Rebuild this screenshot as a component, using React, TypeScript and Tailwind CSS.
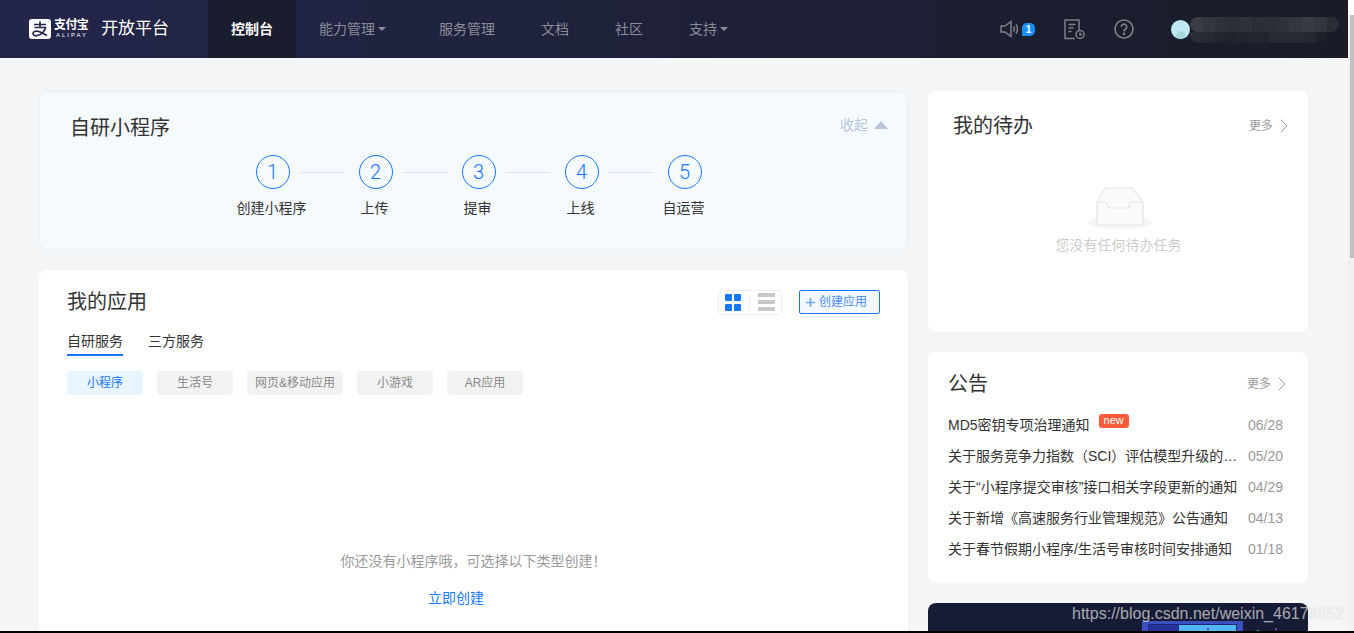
import React from "react";
import { ChevronRight } from "lucide-react";

function Caret() {
  return <span className="ml-[3px] mr-[7px] inline-block w-0 h-0 border-l-[4px] border-r-[4px] border-t-[4px] border-l-transparent border-r-transparent border-t-[#8a8c98]" />;
}

function NavItem({ label, caret, active }: { label: string; caret?: boolean; active?: boolean }) {
  return (
    <div className={`h-full flex items-center px-[23px] text-[14px] ${active ? "bg-[#1a1d2e] text-white font-bold" : "text-[#8a8c98]"}`}>
      {label}
      {caret && <Caret />}
    </div>
  );
}

function Logo() {
  return (
    <div className="flex items-center">
      <svg width="22" height="20" viewBox="0 0 22 20">
        <rect width="22" height="20" rx="3" fill="#fff" />
        <path d="M5 5.500h12M11 2.500v5.500M5.500 8.500h11c-.8 3.500-3.800 7.500-8.500 8.200-2.300.3-4-.5-4-2.200 0-1.800 2.300-3 5-2.200 2.800.8 6 2.700 9 4.200" stroke="#23264a" strokeWidth="1.7" fill="none" />
      </svg>
      <div className="ml-[3px] flex flex-col items-center leading-none text-white">
        <span className="text-[12px] font-bold leading-[13px] tracking-[-0.7px]">支付宝</span>
        <span className="text-[6px] leading-[7px] tracking-[2px] ml-[2px]">ALIPAY</span>
      </div>
      <span className="ml-[13px] text-white text-[17px]">开放平台</span>
    </div>
  );
}

function Step({ n, label }: { n: number; label: string }) {
  return (
    <div className="w-[34px] flex flex-col items-center">
      <div className="w-[34px] h-[34px] rounded-full border border-[#1677ff] text-[#1677ff] text-[20px] font-light font-['Roboto',sans-serif] flex items-center justify-center shrink-0">{n}</div>
      <div className="mt-[9px] mr-[2px] text-[14px] leading-[20px] text-[#333] whitespace-nowrap">{label}</div>
    </div>
  );
}

function Line() {
  return <div className="w-[44px] h-px ml-[10px] mr-[15px] mt-[17px] bg-[#d5e5f9]" />;
}

function Chip({ label, active, w }: { label: string; active?: boolean; w: string }) {
  return (
    <div className={`h-[24px] ${w} rounded-[4px] flex items-center justify-center text-[12px] ${active ? "bg-[#e8f4ff] text-[#1677ff]" : "bg-[#f2f2f2] text-[#888]"}`}>{label}</div>
  );
}

function More() {
  return (
    <div className="flex items-center text-[12px] text-[#999]">
      更多
      <ChevronRight size={24} strokeWidth={1} className="ml-[-1px]" />
    </div>
  );
}

function Notice({ title, date, isNew }: { title: string; date: string; isNew?: boolean }) {
  return (
    <div className="h-[31px] flex items-center justify-between">
      <div className="flex items-start w-[290px] min-w-0">
        <span className="text-[14px] leading-[20px] text-[#333] truncate">{title}</span>
        {isNew && <span className="ml-[9px] mt-[-1px] h-[14px] px-[5px] rounded-[3px] bg-[#ff5a3c] text-white text-[11px] leading-[12px] shrink-0">new</span>}
      </div>
      <span className="text-[14px] leading-[20px] mt-[1px] text-[#999]">{date}</span>
    </div>
  );
}

const mosaicTop = ["#3a3d46", "#33363f", "#2e313a", "#2c2f38", "#2e313a", "#2b2e37", "#2c2f38", "#2e313a", "#33363f", "#383a44", "#34363f", "#2a2d36"];
const mosaicBottom = ["#2b2e37", "#272a33", "#23262f", "#21242d", "#22252e", "#23262f", "#21242d", "#292b34", "#292b34", "#282a33", "#262831", "#1e212a"];

function Mosaic() {
  return (
    <div className="w-[149px] h-[26px] flex flex-col mt-[2px]">
      <div className="h-[15px] flex rounded-[8px] overflow-hidden">
        {mosaicTop.map((c, i) => <div key={i} className="flex-1" style={{ backgroundColor: c }} />)}
      </div>
      <div className="h-[11px] w-[137px] flex rounded-b-[8px] overflow-hidden">
        {mosaicBottom.map((c, i) => <div key={i} className="flex-1" style={{ backgroundColor: c }} />)}
      </div>
    </div>
  );
}

export default function App() {
  return (
    <div className="relative w-[1354px] h-[633px] overflow-hidden flex bg-white font-['Liberation_Sans','Noto_Sans_CJK_SC',sans-serif]">
      <div className="w-[1348px] h-[631px] overflow-hidden flex flex-col bg-[#f3f5f7] shrink-0">
        <header className="h-[58px] shrink-0 flex items-center bg-gradient-to-r from-[#23264a] to-[#191c28]">
          <div className="w-[208px] pl-[29px] shrink-0"><Logo /></div>
          <NavItem label="控制台" active />
          <NavItem label="能力管理" caret />
          <NavItem label="服务管理" />
          <NavItem label="文档" />
          <NavItem label="社区" />
          <NavItem label="支持" caret />
          <div className="ml-auto flex items-center h-full pr-[9px]">
            <svg width="20" height="20" viewBox="0 0 20 20" fill="none" stroke="#7f8087" strokeWidth="1.5"><path d="M1 7h4l6-4.500v15L5 13H1z" /><path d="M13.500 7.500c1 1.500 1 3.500 0 5M16 5.500c2 2.500 2 6.500 0 9" /></svg>
            <span className="ml-[2px] w-[13px] h-[13px] rounded-[5px] rounded-bl-none bg-[#1890ff] text-white text-[10px] font-bold flex items-center justify-center">1</span>
            <svg className="ml-[29px]" width="21" height="21" viewBox="0 0 21 21" fill="none" stroke="#7f8087" strokeWidth="1.5"><path d="M11 19.500H1V1h14v10" /><path d="M4.500 5.500h7M4.500 9h5M4.500 12.500h3" /><circle cx="16" cy="15.500" r="4" /><path d="M16 13.500v2.200h2" /></svg>
            <svg className="ml-[29px]" width="20" height="20" viewBox="0 0 20 20" fill="none" stroke="#7f8087" strokeWidth="1.6"><circle cx="10" cy="10" r="9" /><path d="M7.300 7.800a2.700 2.700 0 1 1 4.300 2.200c-1 .7-1.600 1.200-1.600 2.400" strokeWidth="1.700" /><circle cx="10" cy="14.800" r=".6" fill="#7f8087" /></svg>
            <div className="ml-[37px] w-[19px] h-[19px] rounded-full bg-[#bfe8f2] flex items-end justify-center overflow-hidden">
              <div className="w-[10px] h-[8px] rounded-t-full bg-[#a4d8dd]" />
            </div>
            <Mosaic />
          </div>
        </header>
        <main className="flex-1 min-h-0 flex gap-[20px] pl-[39px] pt-[33px]">
          <div className="w-[869px] flex flex-col gap-[20px] shrink-0">
            <section className="h-[159px] rounded-[8px] bg-[#f5faff] border border-[#e6f0fa] relative px-[30px] pt-[21px] shrink-0">
              <h2 className="text-[20px] leading-[30px] text-[#333]">自研小程序</h2>
              <div className="absolute right-[19px] top-[23px] flex items-center text-[14px] leading-[20px] text-[#b7c4d9]">
                收起
                <span className="ml-[6px] w-0 h-0 border-l-[7px] border-r-[7px] border-b-[8px] border-l-transparent border-r-transparent border-b-[#b7c4d9]" />
              </div>
              <div className="flex justify-center pt-[12px] pl-[10px]">
                <Step n={1} label="创建小程序" />
                <Line />
                <Step n={2} label="上传" />
                <Line />
                <Step n={3} label="提审" />
                <Line />
                <Step n={4} label="上线" />
                <Line />
                <Step n={5} label="自运营" />
              </div>
            </section>
            <section className="flex-1 rounded-t-[8px] bg-white px-[28px] pt-[17px] flex flex-col">
              <div className="flex items-center justify-between">
                <h2 className="text-[20px] leading-[30px] text-[#333]">我的应用</h2>
                <div className="flex items-center">
                  <div className="w-[64px] h-[25px] rounded-[4px] border border-[#eee] flex items-center pl-[6px]">
                    <div className="grid grid-cols-2 gap-x-[2px] gap-y-[3px] w-[16px]">
                      <i className="w-[7px] h-[7px] rounded-[1px] bg-[#1677ff]" />
                      <i className="w-[7px] h-[7px] rounded-[1px] bg-[#1677ff]" />
                      <i className="w-[7px] h-[7px] rounded-[1px] bg-[#1677ff]" />
                      <i className="w-[7px] h-[7px] rounded-[1px] bg-[#1677ff]" />
                    </div>
                    <div className="w-px h-[15px] bg-[#eee] ml-[8px] mr-[8px]" />
                    <div className="flex flex-col gap-[3px]">
                      <i className="block w-[17px] h-[4px] bg-[#c8c8c8]" />
                      <i className="block w-[17px] h-[4px] bg-[#c8c8c8]" />
                      <i className="block w-[17px] h-[4px] bg-[#c8c8c8]" />
                    </div>
                  </div>
                  <div className="ml-[17px] w-[81px] h-[24px] rounded-[2px] border border-[#1677ff] bg-[#f4f9ff] text-[#4a8df8] text-[12px] flex items-center pl-[6px]">
                    <svg className="mr-[4px]" width="9" height="9" viewBox="0 0 9 9" stroke="#6ea4f5" strokeWidth="1.6"><path d="M0 4.500h9M4.500 0v9" /></svg>创建应用
                  </div>
                </div>
              </div>
              <div className="flex mt-[12px] text-[14px] text-[#333]">
                <div className="h-[27px] border-b-2 border-[#1677ff] leading-[24px]">自研服务</div>
                <div className="ml-[25px] leading-[24px]">三方服务</div>
              </div>
              <div className="flex gap-[14px] mt-[15px]">
                <Chip label="小程序" active w="w-[76px]" />
                <Chip label="生活号" w="w-[76px]" />
                <Chip label="网页&移动应用" w="w-[96px]" />
                <Chip label="小游戏" w="w-[76px]" />
                <Chip label="AR应用" w="w-[76px]" />
              </div>
              <div className="mt-[156px] text-center text-[14px] leading-[20px] text-[#999]">你还没有小程序哦，可选择以下类型创建！</div>
              <div className="mt-[17px] pr-[35px] text-center text-[14px] leading-[20px] text-[#1677ff]">立即创建</div>
            </section>
          </div>
          <div className="w-[380px] flex flex-col gap-[20px] shrink-0">
            <section className="h-[241px] rounded-[8px] bg-white pl-[25px] pr-[12px] pt-[20px] shrink-0">
              <div className="flex items-center justify-between">
                <h2 className="text-[20px] leading-[30px] text-[#333]">我的待办</h2>
                <More />
              </div>
              <div className="flex flex-col items-center mt-[45px] pr-[12px]">
                <svg className="ml-[3px]" width="64" height="44" viewBox="0 0 64 44" fill="none">
                  <ellipse cx="32" cy="36.500" rx="32" ry="6.500" fill="#f5f5f5" />
                  <path d="M9 16 17 2h27l11 14v20a3 3 0 0 1-3 3H12a3 3 0 0 1-3-3z" fill="#fafafa" stroke="#e3e3e3" strokeWidth="1.200" />
                  <path d="M9 16h9c2 0 1 6 4 6h17c3 0 2-6 4-6h12" fill="none" stroke="#e3e3e3" strokeWidth="1.200" />
                </svg>
                <div className="mt-[5px] text-[14px] leading-[20px] text-[#ccc]">您没有任何待办任务</div>
              </div>
            </section>
            <section className="h-[231px] rounded-[8px] bg-white pl-[20px] pr-[14px] pt-[17px] shrink-0">
              <div className="flex items-center justify-between">
                <h2 className="text-[20px] leading-[30px] text-[#333]">公告</h2>
                <More />
              </div>
              <div className="mt-[10px] pr-[11px]">
                <Notice title="MD5密钥专项治理通知" date="06/28" isNew />
                <Notice title="关于服务竞争力指数（SCI）评估模型升级的通知" date="05/20" />
                <Notice title="关于“小程序提交审核”接口相关字段更新的通知" date="04/29" />
                <Notice title="关于新增《高速服务行业管理规范》公告通知" date="04/13" />
                <Notice title="关于春节假期小程序/生活号审核时间安排通知" date="01/18" />
              </div>
            </section>
            <section className="flex-1 rounded-t-[8px] bg-[#171c36] relative overflow-hidden shrink-0 min-h-[28px]">
              <div className="absolute left-[214px] top-[18px] w-[101px] h-[12px] bg-[#3a50c0] px-[6px] pt-[3px]">
                <div className="h-[9px] flex border border-[#1d2b78]">
                  <div className="w-[30px] bg-[#27339a]" />
                  <div className="flex-1 bg-[#4fb6f0]" />
                </div>
              </div>
              <i className="absolute left-[279px] top-[25px] w-[2px] h-[2px] bg-[#6a3fb0]" />
              <i className="absolute left-[329px] top-[27px] w-[2px] h-[2px] bg-[#2ac5c5]" />
              <i className="absolute left-[347px] top-[25px] w-[2px] h-[2px] bg-[#7a3fc0]" />
            </section>
          </div>
        </main>
      </div>
      <div className="w-[6px] h-[631px] bg-[#f1f1f1] flex flex-col items-end">
        <div className="w-full h-[15px] bg-white shrink-0" />
        <div className="w-[4px] h-[243px] bg-[#c1c1c1]" />
      </div>
      <div className="absolute left-[1072px] top-[604px] text-[16px] leading-[20px] text-white/60 whitespace-nowrap [text-shadow:0_0_1px_rgba(90,90,90,0.25)]">https://blog.csdn.net/weixin_46178852</div>
      <div className="absolute left-0 top-[631px] w-[1354px] h-[2px] bg-black" />
    </div>
  );
}
